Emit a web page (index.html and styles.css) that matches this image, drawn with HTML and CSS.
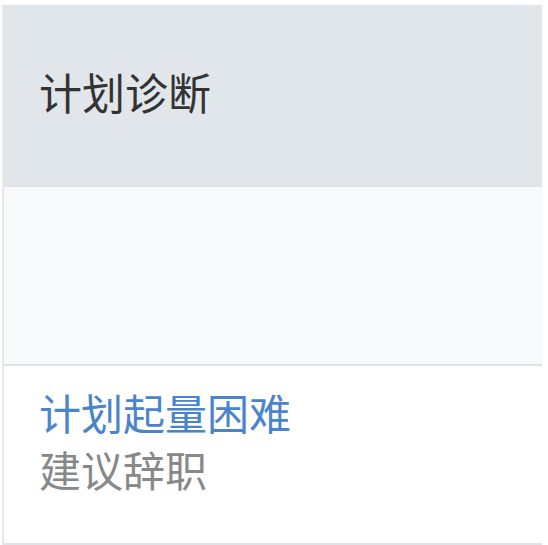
FILE: index.html
```html
<!DOCTYPE html>
<html>
<head>
    <title>plan</title>
    <link rel="stylesheet" href="styles.css">
</head>
<body>
    <div class="table">
        <div class="row head">
            <div class="cell">计划诊断</div>
        </div>
        <div class="row empty">
            <div class="cell"></div>
        </div>
        <div class="row">
            <div class="cell body">
                <p class="link">计划起量困难</p>
                <p class="tip">建议辞职</p>
            </div>
        </div>
    </div>
</body>
</html>
```

FILE: styles.css
```css
*{padding: 0;margin: 0;}
body{
    background: #fff;
    font-family: "Noto Sans CJK SC", "Noto Sans", sans-serif;
}
.table{
    width: 538px;
    margin: 5px 0 0 2px;
    border-top: 1px solid #e4e7ea;
    border-left: 2px solid #e6e8eb;
}
.row{
    height: 177px;
    display: flex;
    align-items: center;
    border-bottom: 2px solid #dfe2e6;
}
.cell{
    padding-left: 35px;
    font-size: 42px;
    line-height: 57px;
}
.head{
    height: 179px;
    background: #e1e6ea;
    color: #333;
}
.head .cell{
    font-size: 43px;
    padding-bottom: 8px;
}
.empty{
    background: #f7f9fb;
}
.body{
    padding-bottom: 30px;
}
.link{
    color: #4a84cc;
}
.tip{
    color: #888;
}
```
